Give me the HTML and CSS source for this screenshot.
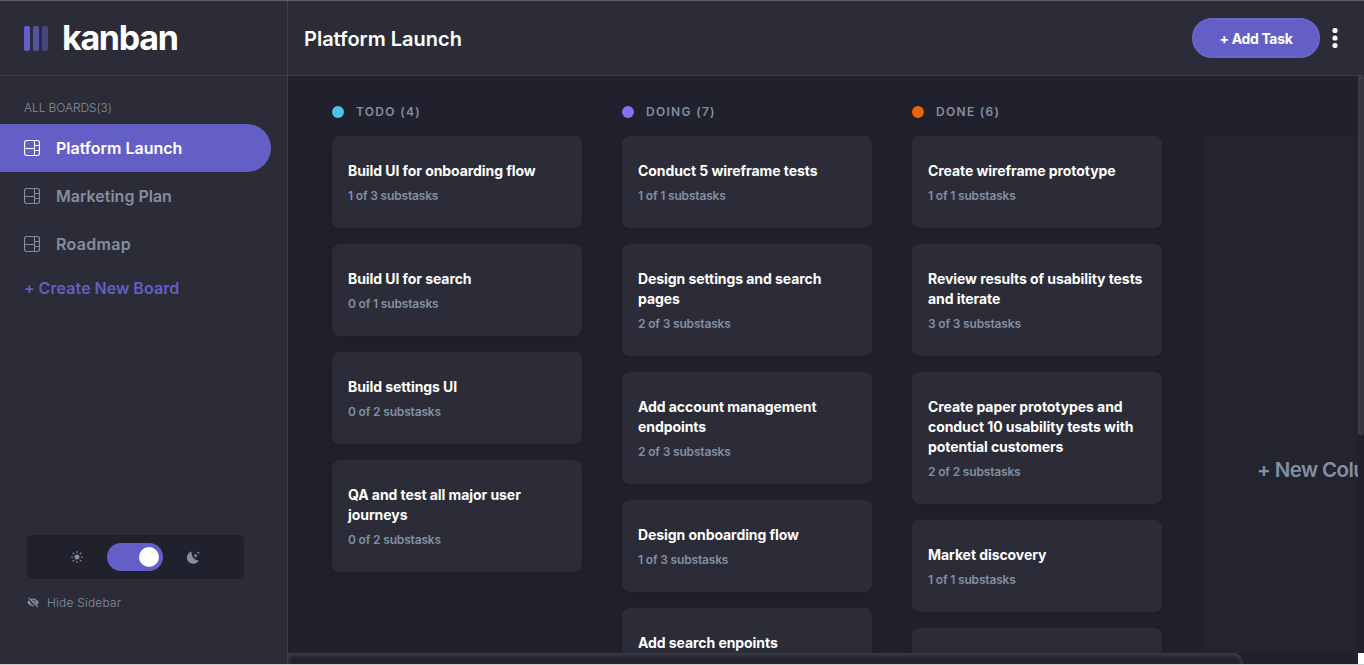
FILE: index.html
```html
<!DOCTYPE html>
<html lang="en">
<head>
<meta charset="utf-8">
<title>Kanban</title>
<link rel="stylesheet" href="styles.css">
</head>
<body>
<svg width="0" height="0" class="defs" aria-hidden="true">
  <symbol id="board" viewBox="0 0 16 16"><g fill="none" stroke="currentColor"><rect x=".55" y=".55" width="14.9" height="14.9" rx="2.2" stroke-width="1.1"/><path d="M10.500 .5v15M.5 8.500h10M10.500 5.500h5M10.500 10.500h5"/></g></symbol>
</svg>
<div class="app">
  <aside class="sidebar">
    <div class="brand">
      <svg width="24" height="25" viewBox="0 0 24 25" fill="#635fc7"><rect width="6" height="25" rx="2"/><rect x="9" width="6" height="25" rx="2" opacity=".75"/><rect x="18" width="6" height="25" rx="2" opacity=".5"/></svg>
      <span class="brand-name">kanban</span>
    </div>
    <div class="boards-label">ALL BOARDS(3)</div>
    <nav class="boards">
      <a class="board-link active"><svg width="16" height="16"><use href="#board"/></svg><span>Platform Launch</span></a>
      <a class="board-link"><svg width="16" height="16"><use href="#board"/></svg><span>Marketing Plan</span></a>
      <a class="board-link roadmap"><svg width="16" height="16"><use href="#board"/></svg><span>Roadmap</span></a>
    </nav>
    <div class="create">+ Create New Board</div>
    <div class="theme">
      <svg width="12" height="12" viewBox="0 0 12 12"><circle cx="6" cy="6" r="2.500" fill="currentColor"/><path d="M6 .3v1.300M6 10.400v1.300M.3 6h1.300M10.400 6h1.300M2 2l.9.9M9.100 9.100l.9.9M2 10l.9-.9M9.100 2.900l.9-.9" stroke="currentColor" stroke-width="1.100" stroke-linecap="round"/></svg>
      <div class="toggle"><div class="knob"></div></div>
      <svg width="13" height="13" viewBox="0 0 13 13" fill="currentColor"><path d="M4.800.6C3.600 4.500 6.800 9.400 11.700 9.400A6.200 6.200 0 1 1 4.800.6Z"/><path d="M8.600 2.600l.7 1.500 1.500.7-1.500.7-.7 1.500-.7-1.500-1.500-.7 1.500-.7ZM11.300.2l.5 1 1 .5-1 .5-.5 1-.5-1-1-.5 1-.5Z"/></svg>
    </div>
    <div class="hide">
      <svg width="12" height="11" viewBox="0 0 12 11"><path d="M.2 5.500Q2.500 1.500 6 1.500T11.800 5.500Q9.500 9.300 6 9.300T.2 5.500Z" fill="currentColor"/><circle cx="6" cy="5.400" r="2.400" fill="none" stroke="#2b2c37" stroke-width=".9"/><path d="M.7 1.200L10.300 11" stroke="#2b2c37" stroke-width="1.200"/><path d="M1.500.7L11 10.200" stroke="currentColor" stroke-width="1.100"/></svg>
      <span>Hide Sidebar</span>
    </div>
  </aside>
  <div class="main">
    <header class="header">
      <h1>Platform Launch</h1>
      <button class="add">+ Add Task</button>
      <svg width="6" height="20" viewBox="0 0 6 20" fill="#fff"><circle cx="3" cy="2.500" r="2.600"/><circle cx="3" cy="10" r="2.600"/><circle cx="3" cy="17.500" r="2.600"/></svg>
    </header>
    <div class="viewport">
      <div class="canvas">
        <section class="column">
          <h2><i class="dot todo"></i>TODO (4)</h2>
          <article class="card"><h3>Build UI for onboarding flow</h3><p>1 of 3 substasks</p></article>
          <article class="card"><h3>Build UI for search</h3><p>0 of 1 substasks</p></article>
          <article class="card"><h3>Build settings UI</h3><p>0 of 2 substasks</p></article>
          <article class="card"><h3>QA and test all major user<br>journeys</h3><p>0 of 2 substasks</p></article>
        </section>
        <section class="column">
          <h2><i class="dot doing"></i>DOING (7)</h2>
          <article class="card"><h3>Conduct 5 wireframe tests</h3><p>1 of 1 substasks</p></article>
          <article class="card"><h3>Design settings and search<br>pages</h3><p>2 of 3 substasks</p></article>
          <article class="card"><h3>Add account management<br>endpoints</h3><p>2 of 3 substasks</p></article>
          <article class="card"><h3>Design onboarding flow</h3><p>1 of 3 substasks</p></article>
          <article class="card"><h3>Add search enpoints</h3></article>
        </section>
        <section class="column">
          <h2><i class="dot done"></i>DONE (6)</h2>
          <article class="card"><h3>Create wireframe prototype</h3><p>1 of 1 substasks</p></article>
          <article class="card"><h3>Review results of usability tests<br>and iterate</h3><p>3 of 3 substasks</p></article>
          <article class="card"><h3>Create paper prototypes and<br>conduct 10 usability tests with<br>potential customers</h3><p>2 of 2 substasks</p></article>
          <article class="card"><h3>Market discovery</h3><p>1 of 1 substasks</p></article>
          <article class="card"></article>
        </section>
        <div class="new-column">+ New Column</div>
      </div>
      <div class="vtrack"><div class="vthumb"></div></div>
      <div class="htrack"><div class="hthumb"></div></div>
      <div class="corner"></div>
    </div>
  </div>
</div>
</body>
</html>
```
FILE: styles.css
```css
* { box-sizing: border-box; }
body, h1, h2, h3, p { margin: 0; }
body { font-family: Inter, "Liberation Sans", sans-serif; background: #20212c; overflow: hidden; }
.defs { position: absolute; }
.app { display: flex; width: 1364px; height: 665px; border-top: 1px solid #5f615f; border-bottom: 1px solid #c9c9cb; }
.sidebar { width: 288px; flex: none; display: flex; flex-direction: column; background: #2b2c37; border-right: 1px solid #3e3f4e; color: #828fa3; }
.brand { height: 75px; flex: none; padding-left: 24px; display: flex; align-items: center; gap: 14px; border-bottom: 1px solid #3e3f4e; }
.brand-name { color: #fff; font-size: 34px; font-weight: 700; line-height: 40px; letter-spacing: -1.3px; }
.boards-label { height: 48px; padding: 24px 24px 0; font-size: 12px; line-height: 16px; font-weight: 300; letter-spacing: -0.1px; white-space: nowrap; }
.board-link { display: flex; align-items: center; gap: 16px; width: 271px; height: 48px; padding-left: 24px; font-size: 16px; font-weight: 600; }
.roadmap { letter-spacing: 0.3px; }
.active { background: #635fc7; color: #fff; border-radius: 0 24px 24px 0; }
.create { color: #635fc7; padding-left: 24px; font-size: 16px; line-height: 24px; font-weight: 600; letter-spacing: 0.1px; word-spacing: -0.4px; margin-top: 8px; }
.theme { display: flex; align-items: center; justify-content: center; gap: 24px; margin: auto 43px 15px 27px; height: 44px; flex: none; border-radius: 6px; background: #20212c; }
.toggle { width: 56px; height: 28px; border-radius: 14px; background: #635fc7; padding: 4px; display: flex; justify-content: flex-end; }
.knob { width: 20px; height: 20px; border-radius: 50%; background: #fff; }
.hide { display: flex; align-items: center; gap: 8px; height: 16px; margin: 0 0 54px 27px; font-size: 12px; font-weight: 300; letter-spacing: 0.18px; }
.main { flex: 1; min-width: 0; display: flex; flex-direction: column; }
.header { height: 75px; flex: none; background: #2b2c37; border-bottom: 1px solid #3e3f4e; display: flex; align-items: center; padding: 0 26px 0 16px; }
h1 { color: #fff; font-size: 20px; font-weight: 600; line-height: 28px; padding-top: 1px; margin-right: auto; }
.add { width: 128px; height: 40px; border: 2px solid #6965c9; border-radius: 20px; background: #635fc7; color: #fff; font: 700 14px Inter, sans-serif; letter-spacing: -0.35px; padding: 0; margin-right: 12px; }
.viewport { flex: 1; min-height: 0; display: grid; grid-template: minmax(0, 1fr) 11px / minmax(0, 1fr) 6px; }
.canvas { overflow: hidden; display: flex; gap: 40px; padding: 28px 0 0 44px; }
.column { flex: 0 0 250px; display: flex; flex-direction: column; gap: 16px; }
h2 { flex: none; display: flex; align-items: center; gap: 12px; height: 16px; padding-bottom: 1px; color: #828fa3; font-size: 12px; font-weight: 600; letter-spacing: 1.3px; }
.dot { width: 12px; height: 12px; border-radius: 50%; }
.todo { background: #49c4e5; }
.doing { background: #8471f2; }
.done { background: #e8650c; }
.card { flex: none; min-height: 92px; padding: 25px 16px 24px; border-radius: 8px; background: #2b2c37; box-shadow: 0 4px 6px rgba(20, 22, 36, .25); }
h3 { color: #fff; font-size: 14px; line-height: 20px; font-weight: 700; letter-spacing: -0.07px; white-space: nowrap; }
.card p { color: #828fa3; font-size: 12px; line-height: 16px; font-weight: 600; letter-spacing: -0.17px; margin-top: 7px; }
.new-column { flex: 0 0 280px; margin-top: 32px; height: 664px; display: flex; align-items: center; padding: 2px 0 0 55px; background: #23242d; color: #828fa3; font-size: 20.5px; font-weight: 600; letter-spacing: -0.6px; white-space: nowrap; }
.vthumb { height: 359px; border-radius: 5px; background: #2b2c35; box-shadow: inset 1px 1px 5px #4d4d56; }
.hthumb { width: 955px; height: 11px; border-top-right-radius: 10px; background: #20212c; box-shadow: inset 0 2px 5px #45464f; }
.corner { background: #fff; }
```
